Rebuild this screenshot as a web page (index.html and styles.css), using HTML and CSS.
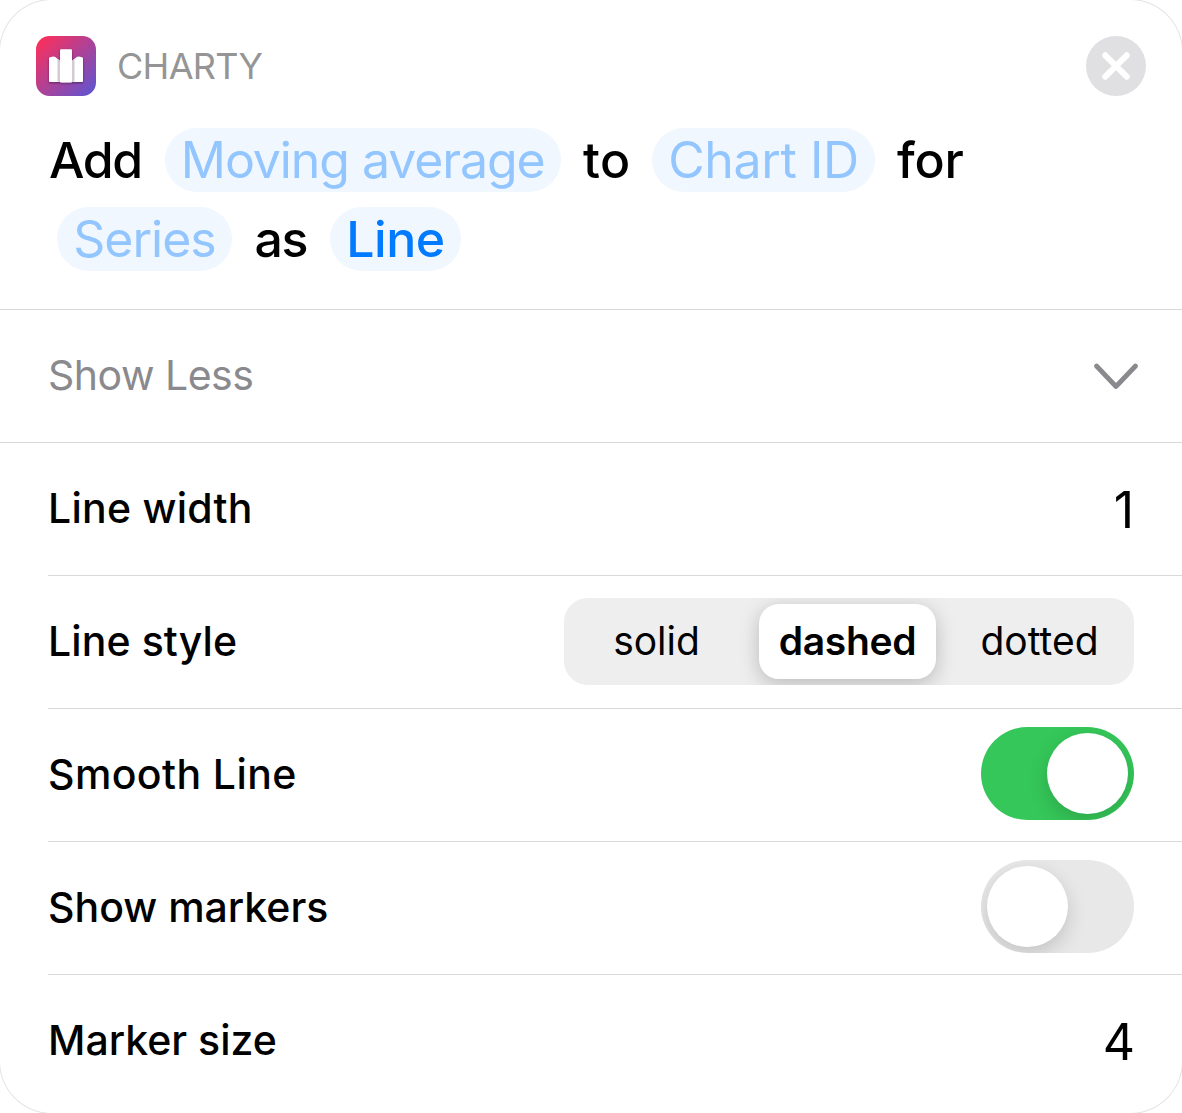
FILE: index.html
```html
<!DOCTYPE html>
<html lang="en">
<head>
<meta charset="utf-8">
<title>Charty</title>
<link rel="stylesheet" href="styles.css">
</head>
<body>
<main class="card">
  <header class="header">
    <svg class="app-icon" viewBox="0 0 60 60" aria-hidden="true">
      <defs>
        <linearGradient id="bg" x1="0" y1="0" x2="1" y2="1">
          <stop offset="0.05" stop-color="#fd2f5b"/>
          <stop offset="1" stop-color="#5856d6"/>
        </linearGradient>
        <filter id="shade" x="-20%" y="-20%" width="140%" height="140%">
          <feDropShadow dx="0" dy="1" stdDeviation="0.9" flood-color="#30103c" flood-opacity="0.6"/>
        </filter>
      </defs>
      <rect width="60" height="60" rx="13.5" fill="url(#bg)"/>
      <g filter="url(#shade)">
        <path d="M13 22.5q0-1 1-1.200l3.500-.8q1 0 1.700.6l4.300 3.400v21.500h-9.500q-1 0-1-1z" fill="#fff"/>
        <path d="M47 22.500q0-1-1-1.200l-3.500-.8q-1 0-1.700.6l-4.300 3.400v21.500h9.500q1 0 1-1z" fill="#fff"/>
        <path d="M21.500 22.800l2.500 2v21h-2.500zM38.500 22.800l-2.500 2v21h2.500z" fill="#d2ccd2"/>
        <rect x="24" y="13.300" width="12" height="33.200" rx="1.200" fill="#fff"/>
      </g>
    </svg>
    <span class="app-name">CHARTY</span>
    <svg class="close" viewBox="0 0 60 60" aria-label="Close">
      <circle cx="30" cy="30" r="30" fill="#e0e0e2"/>
      <path d="M19.300 19.300l21.400 21.400M40.700 19.300L19.300 40.700" stroke="#fff" stroke-width="6" stroke-linecap="round"/>
    </svg>
  </header>
  <section class="summary">
    <div class="summary-line">
      <span class="word add">Add</span>
      <span class="pill moving">Moving average</span>
      <span class="word to">to</span>
      <span class="pill chart">Chart ID</span>
      <span class="word for">for</span>
    </div>
    <div class="summary-line second">
      <span class="pill series">Series</span>
      <span class="word as">as</span>
      <span class="pill line filled">Line</span>
    </div>
  </section>
  <section class="toggle-more">
    <span class="more-label">Show Less</span>
    <svg class="chevron" viewBox="0 0 46 28" aria-hidden="true">
      <path d="M3.500 4L23 24.500L42.500 4" fill="none" stroke="#8a8a8e" stroke-width="4.800" stroke-linecap="round" stroke-linejoin="round"/>
    </svg>
  </section>
  <section class="rows">
    <div class="row"><span class="label l-width">Line width</span><span class="value">1</span></div>
    <div class="row">
      <span class="label l-style">Line style</span>
      <div class="segments">
        <span class="segment solid">solid</span>
        <span class="segment selected">dashed</span>
        <span class="segment dotted">dotted</span>
      </div>
    </div>
    <div class="row"><span class="label l-smooth">Smooth Line</span><span class="switch on"><span class="knob"></span></span></div>
    <div class="row"><span class="label">Show markers</span><span class="switch"><span class="knob"></span></span></div>
    <div class="row"><span class="label">Marker size</span><span class="value">4</span></div>
  </section>
</main>
</body>
</html>
```
FILE: styles.css
```css
* { box-sizing: border-box; }
body {
  margin: 0;
  background: #fff;
  font-family: Inter, "Liberation Sans", sans-serif;
  color: #000;
  overflow: hidden;
}
.card {
  width: 1182px;
  height: 1113px;
  border-radius: 52px;
  background: #fff;
  box-shadow: 0 0 0 1px #e4e4e4;
}
.header {
  display: flex;
  align-items: center;
  padding: 36px 36px 0;
  height: 96px;
}
.app-icon, .close { width: 60px; height: 60px; flex: none; }
.app-name {
  margin-left: 21px;
  font-size: 36px;
  line-height: 60px;
  letter-spacing: -0.7px;
  color: #959595;
}
.close { margin-left: auto; }
.summary {
  height: 214px;
  padding: 32px 49px 0;
  border-bottom: 1px solid #d9d9db;
  font-size: 50px;
  white-space: nowrap;
}
.summary-line { display: flex; height: 64px; line-height: 64px; }
.second { margin-top: 15px; padding-left: 8px; }
.word { font-weight: 500; }
.pill {
  height: 64px;
  border-radius: 32px;
  background: #f0f7ff;
  color: #93c6ff;
  text-align: center;
}
.filled { color: #007aff; font-weight: 500; }
.add { width: 115.5px; letter-spacing: -1.4px; }
.moving { width: 396.5px; letter-spacing: -1.08px; }
.to { width: 91px; padding-left: 22px; letter-spacing: 0.5px; }
.chart { width: 223px; letter-spacing: -0.4px; }
.for { padding-left: 22px; letter-spacing: -0.2px; }
.series { width: 175px; letter-spacing: -1px; }
.as { width: 98px; padding-left: 22.5px; letter-spacing: -1.5px; }
.line { width: 131px; letter-spacing: -0.5px; }
.toggle-more {
  display: flex;
  align-items: center;
  justify-content: space-between;
  height: 133px;
  padding: 0 43px 0 48px;
  border-bottom: 1px solid #d9d9db;
}
.more-label {
  padding-bottom: 2px;
  font-size: 41px;
  letter-spacing: -0.5px;
  color: #8a8a8e;
}
.chevron { width: 46px; height: 28px; }
.rows { padding-left: 48px; }
.row {
  display: flex;
  align-items: center;
  justify-content: space-between;
  height: 133px;
  padding-right: 48px;
  border-bottom: 1px solid #d9d9db;
}
.row:last-child { height: 132px; border-bottom: 0; }
.label { padding-bottom: 2px; font-size: 41px; font-weight: 500; }
.l-width { letter-spacing: 0.25px; }
.l-style { letter-spacing: 0.1px; }
.l-smooth { letter-spacing: 0.4px; }
.value { font-size: 50px; padding-top: 2px; }
.row:last-child .value { margin-right: -1px; }
.segments {
  display: flex;
  align-items: center;
  width: 570px;
  height: 87px;
  margin-bottom: 2px;
  padding: 6px;
  border-radius: 24px;
  background: #eee;
  overflow: hidden;
  font-size: 39px;
}
.segment {
  height: 75px;
  line-height: 74px;
  text-align: center;
}
.solid { width: 189px; padding-right: 16px; }
.selected {
  width: 177px;
  border-radius: 20px;
  background: #fff;
  font-weight: 600;
  letter-spacing: -0.3px;
  box-shadow: 0 5px 20px rgba(0, 0, 0, 0.22);
}
.dotted { width: 192px; padding-left: 15px; }
.switch {
  display: flex;
  width: 153px;
  height: 93px;
  margin-bottom: 4px;
  padding: 6px;
  border-radius: 46.5px;
  background: #e8e8e8;
  overflow: hidden;
}
.knob {
  width: 81px;
  height: 81px;
  border-radius: 50%;
  background: #fff;
  box-shadow: 0 7px 20px rgba(0, 0, 0, 0.16);
}
.on { justify-content: flex-end; background: #35c759; }
```
